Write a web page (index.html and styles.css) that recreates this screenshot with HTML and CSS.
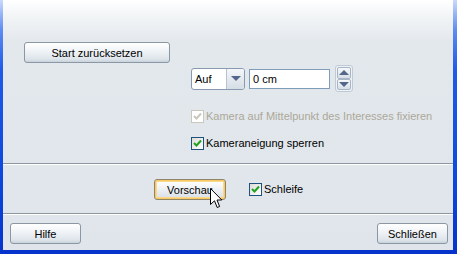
FILE: index.html
```html
<!DOCTYPE html>
<html lang="de">
<head>
    <meta charset="UTF-8">
    <title>Kamera</title>
    <link rel="stylesheet" href="styles.css">
</head>
<body>
    <div class="frame">
        <div class="client">
            <div class="upper">
                <button class="btn btn-reset">Start zurücksetzen</button>

                <div class="controls">
                    <div class="select">
                        <span class="select-value">Auf</span>
                        <span class="select-arrow"><span class="tri-down"></span></span>
                    </div>
                    <div class="field">0 cm</div>
                    <div class="spinner">
                        <span class="spin-half"><span class="tri-up"></span></span>
                        <span class="spin-half"><span class="tri-down"></span></span>
                    </div>
                </div>

                <label class="check disabled check-first">
                    <span class="box">
                        <svg width="9" height="9" viewBox="0 0 9 9"><path d="M1 4 L3.5 6.5 L8 1.5" fill="none" stroke="#cac8bb" stroke-width="2"/></svg>
                    </span>
                    Kamera auf Mittelpunkt des Interesses fixieren
                </label>

                <label class="check check-second">
                    <span class="box">
                        <svg width="9" height="9" viewBox="0 0 9 9"><path d="M1 4 L3.5 6.5 L8 1.5" fill="none" stroke="#21a121" stroke-width="2"/></svg>
                    </span>
                    Kameraneigung sperren
                </label>
            </div>

            <div class="sep"></div>

            <div class="preview-row">
                <button class="btn btn-preview">Vorschau</button>
                <label class="check">
                    <span class="box">
                        <svg width="9" height="9" viewBox="0 0 9 9"><path d="M1 4 L3.5 6.5 L8 1.5" fill="none" stroke="#21a121" stroke-width="2"/></svg>
                    </span>
                    Schleife
                </label>
                <svg class="cursor" width="13" height="21" viewBox="0 0 13 21">
                    <path d="M0.5 0.5 L0.5 16.5 L4.5 12.8 L7.2 19.5 L9.6 18.5 L7 12 L11.8 12 Z" fill="#fff" stroke="#000" stroke-width="1"/>
                </svg>
            </div>

            <div class="sep sep-bottom"></div>

            <div class="footer">
                <button class="btn">Hilfe</button>
                <button class="btn">Schließen</button>
            </div>
        </div>
    </div>
</body>
</html>
```

FILE: styles.css
```css
html, body {
    margin: 0;
    padding: 0;
}
body {
    width: 457px;
    height: 254px;
    overflow: hidden;
    font-family: "Liberation Sans", Arial, sans-serif;
    font-size: 11px;
    color: #000;
}
.frame {
    display: flex;
    box-sizing: border-box;
    width: 457px;
    height: 254px;
    padding: 0 4px 4px 3px;
    background: linear-gradient(to bottom, #c9d9fa 0, #5d8cf2 30px, #1f5ae8 70px, #0c48de 180px, #0533cc 100%);
}
.client {
    flex: 1;
    display: flex;
    flex-direction: column;
    background: linear-gradient(to bottom, #ffffff 0, #f3f5f7 15px, #e3e8ed 42px, #dfe5ea 100%);
}
.upper {
    display: flex;
    flex-direction: column;
    align-items: flex-start;
    padding-top: 42px;
}
.btn {
    box-sizing: border-box;
    height: 21px;
    width: 71px;
    padding: 0;
    font-family: inherit;
    font-size: 11px;
    color: #000;
    border: 1px solid #8b97a3;
    border-radius: 3px;
    background: linear-gradient(to bottom, #ffffff 0, #f1f4f7 40%, #dde4ea 85%, #c9d2db 100%);
}
.btn-reset {
    width: 146px;
    margin-left: 21px;
}
.controls {
    display: flex;
    align-items: center;
    height: 27px;
    margin: 2px 0 0 188px;
}
.select {
    box-sizing: border-box;
    display: flex;
    width: 54px;
    height: 22px;
    border: 1px solid #8a9aae;
    border-radius: 3px;
    background: #fff;
    overflow: hidden;
}
.select-value {
    flex: 1;
    padding: 4px 0 0 3px;
}
.select-arrow {
    display: flex;
    align-items: center;
    justify-content: center;
    width: 17px;
    border-left: 1px solid #b7c3d1;
    background: linear-gradient(to bottom, #f4f6f9, #d5dde6);
}
.tri-down, .tri-up {
    width: 0;
    height: 0;
    border-left: 5px solid transparent;
    border-right: 5px solid transparent;
}
.tri-down {
    border-top: 5px solid #53668a;
}
.tri-up {
    border-bottom: 5px solid #53668a;
}
.field {
    box-sizing: border-box;
    width: 81px;
    height: 20px;
    margin-left: 4px;
    padding: 3px 0 0 3px;
    border: 1px solid #7f9db9;
    background: #fff;
}
.spinner {
    box-sizing: border-box;
    display: flex;
    flex-direction: column;
    width: 18px;
    height: 27px;
    margin-left: 5px;
    padding: 1px;
    border: 1px solid #c0cad6;
    border-radius: 3px;
    background: #eef2f5;
}
.spin-half {
    flex: 1;
    display: flex;
    align-items: center;
    justify-content: center;
    border: 1px solid #a7b5c6;
    border-radius: 2px;
    background: linear-gradient(to bottom, #f6f8fa, #d7dfe7);
}
.check {
    display: flex;
    align-items: center;
    height: 13px;
    line-height: 13px;
    white-space: nowrap;
}
.box {
    box-sizing: border-box;
    display: flex;
    align-items: center;
    justify-content: center;
    width: 13px;
    height: 13px;
    margin-right: 2px;
    border: 1px solid #1c5180;
    background: linear-gradient(135deg, #dcdcd7, #ffffff);
}
.disabled {
    color: #aca899;
}
.disabled .box {
    border-color: #cac8bb;
    background: #fff;
}
.check-first {
    margin: 18px 0 0 188px;
}
.check-second {
    margin: 14px 0 0 188px;
}
.sep {
    height: 1px;
    margin-top: 13px;
    border-bottom: 1px solid #fff;
    background: #8c979f;
}
.sep-bottom {
    margin-top: 13px;
}
.preview-row {
    position: relative;
    display: flex;
    align-items: center;
    height: 21px;
    margin: 14px 0 0 151px;
}
.btn-preview {
    width: 72px;
    margin-right: 23px;
    border-color: #8e8669;
    box-shadow: inset 0 0 0 1px #f9c866, inset 0 0 0 2px #fbd98c;
}
.cursor {
    position: absolute;
    left: 56px;
    top: 9px;
}
.footer {
    display: flex;
    justify-content: space-between;
    margin: 8px 0 0;
    padding: 0 5px 0 7px;
}
```
